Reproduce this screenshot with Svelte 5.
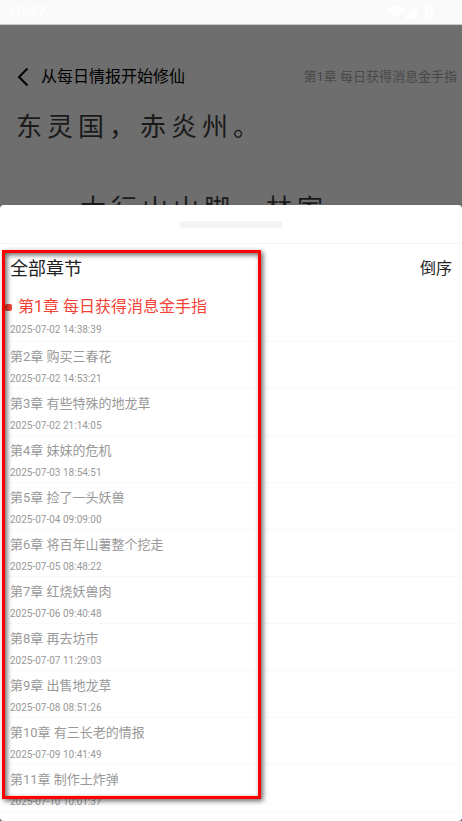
<script lang="ts">
  interface Chapter {
    title: string;
    time: string;
  }

  const chapters: Chapter[] = [
    { title: '第1章 每日获得消息金手指', time: '2025-07-02 14:38:39' },
    { title: '第2章 购买三春花', time: '2025-07-02 14:53:21' },
    { title: '第3章 有些特殊的地龙草', time: '2025-07-02 21:14:05' },
    { title: '第4章 妹妹的危机', time: '2025-07-03 18:54:51' },
    { title: '第5章 捡了一头妖兽', time: '2025-07-04 09:09:00' },
    { title: '第6章 将百年山薯整个挖走', time: '2025-07-05 08:48:22' },
    { title: '第7章 红烧妖兽肉', time: '2025-07-06 09:40:48' },
    { title: '第8章 再去坊市', time: '2025-07-07 11:29:03' },
    { title: '第9章 出售地龙草', time: '2025-07-08 08:51:26' },
    { title: '第10章 有三长老的情报', time: '2025-07-09 10:41:49' },
    { title: '第11章 制作土炸弹', time: '2025-07-10 10:01:37' }
  ];

  let current = $state('第1章 每日获得消息金手指');
  let reversed = $state(false);
  let list = $derived(reversed ? [...chapters].reverse() : chapters);
</script>

<div class="screen">
  <header class="status">
    <span>10:27</span>
    <svg width="46" height="16" viewBox="0 0 46 16" fill="#fff" aria-hidden="true">
      <path d="M0 4.5Q8 -1.5 16 4.5L8 14Z" />
      <path d="M29 2V15H16Z" />
      <path d="M39 1h4v2h2v12h-8V3h2ZM41.5 5l-3 5h2v3l3-5h-2Z" fill-rule="evenodd" />
    </svg>
  </header>

  <main class="reader">
    <nav class="book">
      <button class="back" aria-label="返回">
        <svg width="12" height="20" viewBox="0 0 12 20" fill="none" stroke="#000" stroke-width="2" aria-hidden="true">
          <path d="M10.5 1.5L2 10L10.5 18.5" />
        </svg>
      </button>
      <h1>从每日情报开始修仙</h1>
      <span class="now">第1章 每日获得消息金手指</span>
    </nav>
    <article>
      <p>东灵国，赤炎州。</p>
      <p class="indent">大行山山脚，林家</p>
    </article>
  </main>

  <section class="sheet" aria-label="全部章节">
    <div class="grip"><span></span></div>
    <div class="heading">
      <h2>全部章节</h2>
      <button onclick={() => (reversed = !reversed)}>{reversed ? '正序' : '倒序'}</button>
    </div>
    <ul>
      {#each list as chapter (chapter.title)}
        <li>
          <button class:active={chapter.title === current} onclick={() => (current = chapter.title)}>
            <span class="title">{chapter.title}</span>
            <time>{chapter.time}</time>
          </button>
        </li>
      {/each}
    </ul>
    <div class="marker"></div>
  </section>
</div>

<style>
  :global(body) {
    background: #fff;
  }

  .screen {
    display: flex;
    flex-direction: column;
    height: 100vh;
    overflow: hidden;
    font-family: Roboto, 'Noto Sans CJK SC', sans-serif;
    background: #6e6e6e;
  }

  h1,
  h2,
  p,
  ul {
    margin: 0;
    padding: 0;
    font-weight: 400;
  }

  button {
    padding: 0;
    border: 0;
    background: none;
    font: inherit;
    color: inherit;
    cursor: pointer;
  }

  .status {
    display: flex;
    flex: none;
    justify-content: space-between;
    align-items: center;
    box-sizing: border-box;
    height: 25px;
    padding: 0 28px 0 8px;
    border-bottom: 1px solid #c8cccb;
    background: #fafafa;
    color: #fff;
    font-size: 15px;
    font-weight: 500;
  }

  .reader {
    flex: none;
    height: 180px;
    overflow: hidden;
  }

  .book {
    display: flex;
    align-items: center;
    height: 24px;
    padding: 40px 5px 0 17px;
    color: #000;
  }

  .back {
    display: flex;
  }

  h1 {
    flex: 1;
    padding-left: 12px;
    font-size: 16px;
    line-height: 24px;
    white-space: nowrap;
  }

  .now {
    color: #484848;
    font-size: 13px;
    line-height: 24px;
    white-space: nowrap;
  }

  article {
    padding: 0 16px;
    color: #1a1a1a;
    font-size: 26px;
    line-height: 88px;
    letter-spacing: 5px;
    white-space: nowrap;
  }

  article p:first-child {
    line-height: 76px;
  }

  .indent {
    padding-left: 64px;
  }

  .sheet {
    position: relative;
    flex: 1;
    min-height: 0;
    border-radius: 4px;
    background: #fff;
  }

  .grip {
    display: flex;
    justify-content: center;
    align-items: center;
    height: 38px;
    border-bottom: 1px solid #f4f4f4;
  }

  .grip span {
    width: 104px;
    height: 7px;
    border-radius: 4px;
    background: #f4f4f4;
  }

  .heading {
    display: flex;
    justify-content: space-between;
    align-items: center;
    height: 46px;
    padding: 0 10px 2px;
    color: #222;
  }

  h2 {
    font-size: 18px;
  }

  .heading button {
    font-size: 16px;
  }

  li {
    list-style: none;
    border-bottom: 1px solid #f9f9f9;
  }

  li button {
    display: flex;
    flex-direction: column;
    box-sizing: border-box;
    width: 100%;
    height: 46px;
    padding: 5px 10px 0;
    color: #999;
    text-align: left;
  }

  .title {
    font-size: 13px;
    line-height: 20px;
  }

  time {
    font-size: 10px;
    line-height: 24px;
    color: #999;
  }

  .active {
    height: 49px;
    padding-top: 4px;
  }

  .active .title {
    display: flex;
    align-items: center;
    gap: 6px;
    margin-left: -5px;
    color: #f44336;
    font-size: 16px;
    line-height: 22px;
  }

  .active .title::before {
    content: '';
    width: 7px;
    height: 7px;
    border-radius: 2px;
    background: #f44336;
  }

  .marker {
    position: absolute;
    top: 45px;
    bottom: 22px;
    left: 2px;
    box-sizing: border-box;
    width: 259px;
    border: 3px solid #f00;
    box-shadow:
      2px 2px 5px rgba(0, 0, 0, 0.6),
      inset 2px 2px 5px rgba(0, 0, 0, 0.6);
    pointer-events: none;
  }
</style>
